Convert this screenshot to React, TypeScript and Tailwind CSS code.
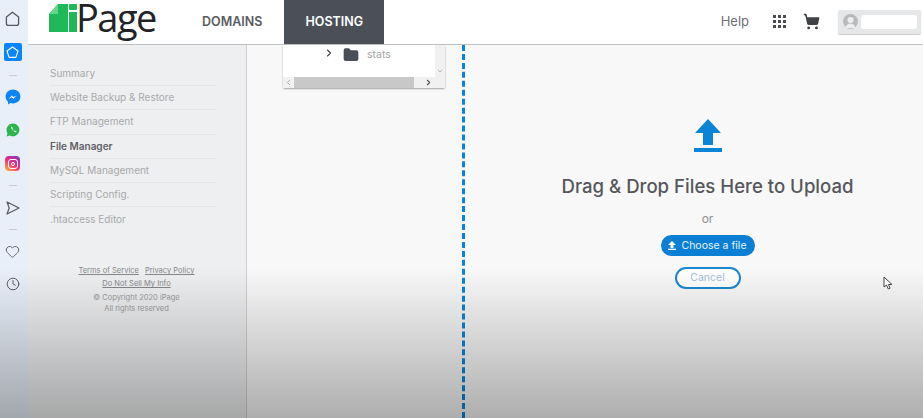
import { ChevronRight, ChevronDown, ChevronLeft, Folder, Heart, Clock, ShoppingCart } from "lucide-react"

const FONT = "font-['Inter','Open_Sans',sans-serif]"

const MENU = [
  { label: "Summary" },
  { label: "Website Backup & Restore" },
  { label: "FTP Management" },
  { label: "File Manager", active: true },
  { label: "MySQL Management" },
  { label: "Scripting Config." },
  { label: ".htaccess Editor" },
]

function Rail() {
  return (
    <aside className="flex w-7 shrink-0 flex-col items-center bg-[#e8eff9] pr-[3px] pt-[11px]">
      <svg width="15" height="16" viewBox="0 0 15 16" fill="none" stroke="#55585c" strokeWidth="1.3" strokeLinejoin="round">
        <path d="M7.5 1.2 13.6 6v6.2c0 1.3-1 2.2-2.2 2.2H3.6c-1.2 0-2.2-.9-2.2-2.2V6z" />
      </svg>
      <div className="mt-[16px] flex h-[18px] w-[18px] items-center justify-center rounded-[2px] bg-[#0a84ff]">
        <svg width="13" height="13" viewBox="0 0 13 13" fill="none" stroke="#fff" strokeWidth="1.1" strokeLinejoin="round">
          <path d="M6.5 1 12 5l-2.1 6.4H3.1L1 5z" />
        </svg>
      </div>
      <div className="mt-[14px] h-px w-2 bg-[#c9ccd2]" />
      <svg className="mt-[13px]" width="16" height="16" viewBox="0 0 16 16">
        <path d="M8 .6C3.8.6.6 3.7.6 7.6c0 2.1.9 3.900 2.400 5.100v2.700l2.400-1.300c.8.2 1.700.4 2.600.4 4.200 0 7.400-3 7.400-6.900S12.200.6 8 .6z" fill="#0b84f5" />
        <path d="m3.700 9.800 3-3.300 1.800 1.500 2.900-1.500-3 3.300-1.800-1.500z" fill="#fff" />
      </svg>
      <svg className="mt-[18px]" width="14" height="14" viewBox="0 0 14 14">
        <path d="M7 .5A6.400 6.400 0 0 0 1.500 10.200L.6 13.400l3.300-.9A6.400 6.400 0 1 0 7 .5z" fill="#2fb44d" />
        <path d="M4.800 3.800c.9 3 2.300 4.600 5.100 5.800l.6-1.300-1.700-.9-.7.700c-.8-.4-1.400-1-1.900-2l.7-.7-.8-1.700z" fill="#fff" />
      </svg>
      <div className="mt-[19px] flex h-[15px] w-[15px] items-center justify-center rounded-[4px] bg-[linear-gradient(35deg,#fbb03b_5%,#ee2a7b_50%,#7a3cc8_95%)]">
        <div className="flex h-[10px] w-[10px] items-center justify-center rounded-[3px] border border-white">
          <div className="h-1 w-1 rounded-full border border-white" />
        </div>
      </div>
      <div className="mt-[14px] h-px w-2 bg-[#c9ccd2]" />
      <svg className="mt-[15px]" width="14" height="14" viewBox="0 0 14 14" fill="none" stroke="#55585c" strokeWidth="1.2" strokeLinejoin="round">
        <path d="M1 1 13 7 1 13l2.200-6z" />
      </svg>
      <div className="mt-[14px] h-px w-2 bg-[#c9ccd2]" />
      <Heart className="mt-[14px]" size={15} color="#55585c" strokeWidth={1.4} />
      <Clock className="mt-[18px]" size={14} color="#55585c" strokeWidth={1.6} />
    </aside>
  )
}

function Header() {
  return (
    <header className="flex h-[45px] shrink-0 items-stretch border-b border-[#bfc0c1] bg-white">
      <div className="ml-[21px] flex w-[132px] items-start">
        <svg className="mt-[4px] shrink-0" width="28" height="28" viewBox="0 0 28 28">
          <path d="M9 0h10v28H0V10z" fill="#20b95a" />
          <path d="M0 10h9V0z" fill="#62d68a" />
          <rect x="20" y="0" width="8" height="6" rx="1" fill="#20b95a" />
          <rect x="20" y="8" width="8" height="20" fill="#20b95a" />
        </svg>
        <span className="-ml-px whitespace-nowrap font-['Open_Sans',sans-serif] text-[38px] leading-[34px] tracking-[-1.5px] text-[#222326]">Page</span>
      </div>
      <a className="ml-[21px] self-center text-[12.5px] font-semibold text-[#5a5c60]">DOMAINS</a>
      <a className="ml-[22px] flex w-[100px] items-center justify-center bg-[#4b4f57] text-[12.5px] font-semibold text-white">HOSTING</a>
      <div className="ml-auto mr-[2px] flex items-center pb-px">
        <span className="text-[13px] text-[#6f7074]">Help</span>
        <div className="ml-[24px] grid grid-cols-3 gap-[2px]">
          {Array.from({ length: 9 }).map((_, i) => (
            <span key={i} className="h-[3px] w-[3px] bg-[#4a4c50]" />
          ))}
        </div>
        <ShoppingCart className="ml-[17px]" size={17} color="#3f4145" fill="#3f4145" />
        <div className="ml-[18px] flex h-[24px] w-[83px] items-center rounded-[2px] bg-[#e6e7e8] pl-[5px] shadow-[0_1px_1px_rgba(0,0,0,0.2)]">
          <svg width="15" height="15" viewBox="0 0 15 15">
            <circle cx="7.5" cy="7.5" r="7.5" fill="#b9babc" />
            <circle cx="7.5" cy="6" r="3" fill="#eeeeee" />
            <path d="M2.500 14c.5-3 2.500-4.500 5-4.500s4.500 1.500 5 4.500z" fill="#eeeeee" />
          </svg>
          <div className="ml-[3px] h-[14px] w-[56px] rounded-[3px] bg-white" />
        </div>
      </div>
    </header>
  )
}

function Sidebar() {
  return (
    <nav className="flex w-[219px] shrink-0 flex-col border-r border-[#cfd0d1] bg-[#eeeff0] pl-[22px] pt-[17px]">
      <ul className="w-[167px]">
        {MENU.map((item) => (
          <li
            key={item.label}
            className={`flex h-[24.2px] items-center whitespace-nowrap border-b border-[#e5e6e7] text-[10px] last:border-b-0 ${
              item.active ? "font-semibold text-[#5f6165]" : "text-[#a8a9ab]"
            }`}
          >
            {item.label}
          </li>
        ))}
      </ul>
      <div className="mt-[35px] flex w-[173px] flex-col items-center text-[7.5px] leading-[10px] text-[#9b9c9e]">
        <div className="flex gap-[6px] text-[#85868a] underline">
          <span>Terms of Service</span>
          <span>Privacy Policy</span>
        </div>
        <span className="mt-[3px] text-[#85868a] underline">Do Not Sell My Info</span>
        <span className="mt-[4px]">© Copyright 2020 iPage</span>
        <span className="mt-px">All rights reserved</span>
      </div>
    </nav>
  )
}

function FileTree() {
  return (
    <section className="flex w-[218px] shrink-0 flex-col items-start border-r-[3px] border-dashed border-[#0a84d6] bg-[#f8f8f8] pl-[36px]">
      <div className="h-[43px] w-[162px] rounded-b-[2px] bg-white shadow-[0_1px_2px_rgba(0,0,0,0.35)]">
        <div className="flex h-[32px]">
          <div className="flex flex-1 items-center pb-[13px] pl-[40px]">
            <ChevronRight className="-mt-[4px]" size={12} color="#3d3f44" strokeWidth={2.2} />
            <Folder className="ml-[8px]" size={16} color="#4a4e58" fill="#4a4e58" />
            <span className="ml-[8px] text-[10.5px] text-[#a3a4a6]">stats</span>
          </div>
          <div className="flex w-[10px] items-end justify-center bg-[#f1f1f1] pb-[2px]">
            <ChevronDown size={8} color="#a5a5a5" strokeWidth={2.5} />
          </div>
        </div>
        <div className="flex h-[11px] items-center bg-[#f1f1f1]">
          <ChevronLeft className="ml-[1px]" size={9} color="#a5a5a5" strokeWidth={2.5} />
          <div className="ml-[1px] h-full w-[120px] bg-[#c8c8c8]" />
          <ChevronRight className="ml-[10px]" size={9} color="#505050" strokeWidth={3} />
        </div>
      </div>
    </section>
  )
}

function UploadPanel() {
  return (
    <section className="flex flex-1 flex-col items-center bg-[#f8f8f8] pl-[27px] pt-[74px]">
      <svg width="28" height="34" viewBox="0 0 28 34" fill="#0a84d6">
        <path d="M14 0 27 14h-8v12H9V14H1z" />
        <rect x="0" y="29" width="28" height="4" />
      </svg>
      <h1 className="mt-[21px] whitespace-nowrap text-[18.6px] font-medium leading-[24px] text-[#55575c]">Drag &amp; Drop Files Here to Upload</h1>
      <span className="mt-[13px] text-[12px] leading-[16px] text-[#8d8e91]">or</span>
      <button type="button" className="mt-[8px] flex h-[21px] w-[94px] items-center justify-center gap-[5px] rounded-full bg-[#0a7fd4] text-[10.5px] text-[#e6f2fb]">
        <svg width="8" height="9" viewBox="0 0 8 9" fill="#fff">
          <path d="M4 0 8 4H5.500v3h-3V4H0z" />
          <rect y="7.700" width="8" height="1.300" />
        </svg>
        Choose a file
      </button>
      <button type="button" className="mt-[11px] h-[22px] w-[66px] rounded-full border-2 border-[#1a86cc] bg-white text-[10.5px] text-[#a9bfd8]">
        Cancel
      </button>
    </section>
  )
}

export default function App() {
  return (
    <div className={`relative flex h-[418px] w-[923px] overflow-hidden bg-white ${FONT}`}>
      <Rail />
      <div className="flex min-w-0 flex-1 flex-col">
        <Header />
        <div className="flex flex-1">
          <Sidebar />
          <FileTree />
          <UploadPanel />
        </div>
      </div>
      {/* video player shade along the bottom */}
      <div className="pointer-events-none absolute inset-x-0 bottom-0 h-[150px] bg-gradient-to-b from-transparent to-black/30" />
      {/* mouse pointer */}
      <svg className="pointer-events-none absolute left-[883px] top-[276px]" width="11" height="15" viewBox="0 0 11 15" fill="#fff" stroke="#444" strokeWidth="1">
        <path d="M1 1v10l2.500-2 1.800 4 1.800-.8L5.400 8.500H9z" />
      </svg>
    </div>
  )
}
